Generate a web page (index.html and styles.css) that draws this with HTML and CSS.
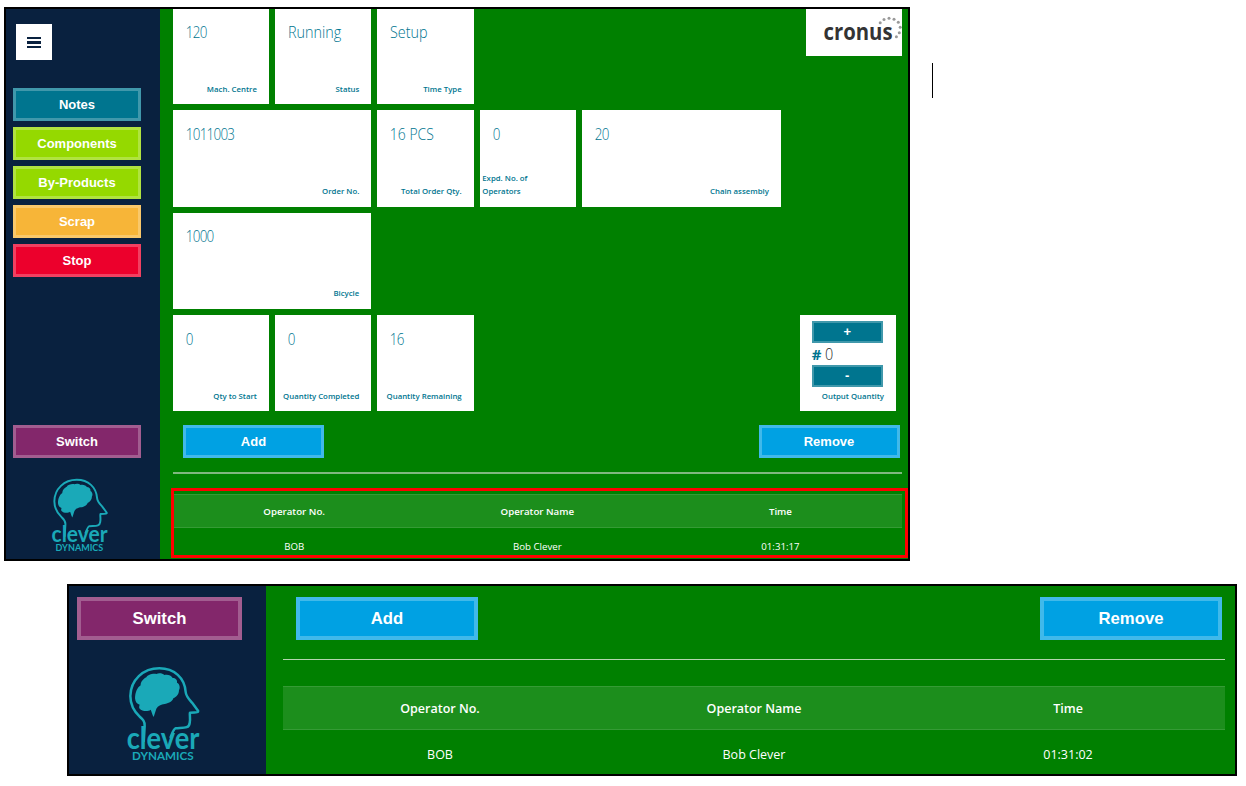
FILE: index.html
```html
<!DOCTYPE html>
<html lang="en">
<head>
<meta charset="utf-8">
<title>Operators</title>
<link rel="stylesheet" href="styles.css">
</head>
<body>
<section class="screen screen-full">
  <aside class="sidebar">
    <button class="menu" aria-label="Menu"><i></i><i></i><i></i></button>
    <nav class="actions">
      <button class="btn teal">Notes</button>
      <button class="btn lime">Components</button>
      <button class="btn lime">By-Products</button>
      <button class="btn amber">Scrap</button>
      <button class="btn red">Stop</button>
    </nav>
    <button class="btn plum switch">Switch</button>
    <svg class="brand" viewBox="48 34 224 288">
      <path class="head-line" d="M101 262 L104 214 C105 200 98 194 89 186 C70 168 61 149 61 124 C62 76 99 41 148 41 C193 41 224 70 227 112 C228 126 240 137 247 145 L264 168 C266 172 262 174 240 174 C238 181 242 190 239 205 C237 222 222 219 197 221 C191 222 187 235 181 250"/>
      <path class="brain" d="M75 131 C75 114 82 98 92 92 C91 82 101 72 109 68 C113 59 131 55 139 58 C147 54 158 56 163 61 C172 58 184 62 187 69 C197 70 203 76 201 84 C209 87 211 100 207 106 C207 119 199 127 190 131 C187 141 174 147 164 148 C153 150 144 153 139 162 L131 187 C127 182 125 171 122 165 C113 172 96 170 89 162 C86 158 88 153 89 150 C80 148 76 141 75 131Z"/>
      <text class="logo-word" x="50" y="282" textLength="218" lengthAdjust="spacingAndGlyphs">clever</text>
      <text class="logo-sub" x="66" y="316" textLength="185" lengthAdjust="spacingAndGlyphs">DYNAMICS</text>
    </svg>
  </aside>
  <main class="main">
    <div class="tiles">
      <div class="tile top"><b>120</b><span>Mach. Centre</span></div>
      <div class="tile top word"><b>Running</b><span>Status</span></div>
      <div class="tile top word"><b>Setup</b><span>Time Type</span></div>
      <div class="cronus">
        <svg width="96" height="47" viewBox="0 0 96 47">
          <text class="cronus-word" x="17.500" y="31" textLength="69" lengthAdjust="spacingAndGlyphs">cronus</text>
          <g fill="#999"><circle cx="74.200" cy="13.800" r="1.500"/><circle cx="78" cy="10.500" r="1.500"/><circle cx="83" cy="9.200" r="1.500"/><circle cx="88" cy="10.200" r="1.500"/><circle cx="92.300" cy="13.300" r="1.500"/><circle cx="94.200" cy="18.300" r="1.500"/><circle cx="93.300" cy="23.700" r="1.500"/><circle cx="90.400" cy="27.700" r="1.500"/></g>
        </svg>
      </div>
    </div>
    <div class="tiles">
      <div class="tile wide"><b>1011003</b><span>Order No.</span></div>
      <div class="tile"><b class="mixed">16 PCS</b><span>Total Order Qty.</span></div>
      <div class="tile two-line"><b>0</b><span>Expd. No. of<br>Operators</span></div>
      <div class="tile wide"><b>20</b><span>Chain assembly</span></div>
    </div>
    <div class="tiles">
      <div class="tile wide"><b>1000</b><span>Bicycle</span></div>
    </div>
    <div class="tiles">
      <div class="tile"><b>0</b><span>Qty to Start</span></div>
      <div class="tile"><b>0</b><span>Quantity Completed</span></div>
      <div class="tile"><b>16</b><span>Quantity Remaining</span></div>
      <div class="tile stepper">
        <button class="btn teal step">+</button>
        <div class="count"><strong>#</strong><em>0</em></div>
        <button class="btn teal step">-</button>
        <span>Output Quantity</span>
      </div>
    </div>
    <div class="toolbar"><button class="btn blue">Add</button><button class="btn blue">Remove</button></div>
    <div class="rule"></div>
    <div class="table">
      <div class="row head"><span>Operator No.</span><span>Operator Name</span><span>Time</span></div>
      <div class="row"><span>BOB</span><span>Bob Clever</span><span>01:31:17</span></div>
    </div>
  </main>
  <div class="highlight"></div>
</section>
<div class="caret"></div>

<section class="screen screen-detail">
  <aside class="sidebar">
    <button class="btn plum switch">Switch</button>
    <svg class="brand" viewBox="48 34 224 288">
      <path class="head-line" d="M101 262 L104 214 C105 200 98 194 89 186 C70 168 61 149 61 124 C62 76 99 41 148 41 C193 41 224 70 227 112 C228 126 240 137 247 145 L264 168 C266 172 262 174 240 174 C238 181 242 190 239 205 C237 222 222 219 197 221 C191 222 187 235 181 250"/>
      <path class="brain" d="M75 131 C75 114 82 98 92 92 C91 82 101 72 109 68 C113 59 131 55 139 58 C147 54 158 56 163 61 C172 58 184 62 187 69 C197 70 203 76 201 84 C209 87 211 100 207 106 C207 119 199 127 190 131 C187 141 174 147 164 148 C153 150 144 153 139 162 L131 187 C127 182 125 171 122 165 C113 172 96 170 89 162 C86 158 88 153 89 150 C80 148 76 141 75 131Z"/>
      <text class="logo-word" x="50" y="282" textLength="218" lengthAdjust="spacingAndGlyphs">clever</text>
      <text class="logo-sub" x="66" y="316" textLength="185" lengthAdjust="spacingAndGlyphs">DYNAMICS</text>
    </svg>
  </aside>
  <main class="main">
    <div class="toolbar"><button class="btn blue">Add</button><button class="btn blue">Remove</button></div>
    <div class="rule"></div>
    <div class="table">
      <div class="row head"><span>Operator No.</span><span>Operator Name</span><span>Time</span></div>
      <div class="row"><span>BOB</span><span>Bob Clever</span><span>01:31:02</span></div>
    </div>
  </main>
</section>
</body>
</html>
```

FILE: styles.css
```css
* { box-sizing: border-box; }

body {
  margin: 0;
  width: 1246px;
  height: 786px;
  padding: 7px 0 0 4px;
  overflow: hidden;
  background: #fff;
  display: grid;
  grid-template-columns: 906px 1fr;
  grid-template-rows: 554px 192px;
  row-gap: 23px;
  font-family: "Open Sans", sans-serif;
}

.screen {
  position: relative;
  display: flex;
  border: 2px solid #000;
  background: #008000;
  overflow: hidden;
}
.screen-full { --btn-h: 33px; --btn-border: 3px; --btn-font: 13px; }
.screen-detail {
  --btn-h: 43px; --btn-border: 4px; --btn-font: 16.700px;
  grid-column: 1 / -1;
  width: 1170px;
  margin-left: 63px;
}

.sidebar {
  flex: none;
  display: flex;
  flex-direction: column;
  background: #09213f;
}
.screen-full .sidebar { width: 154px; padding: 15px 0 0 7px; }
.screen-detail .sidebar { width: 197px; padding: 11px 0 0 8px; }

.menu {
  width: 36px;
  height: 36px;
  margin-left: 3px;
  padding: 1px 0 0;
  border: 0;
  background: #fff;
  display: flex;
  flex-direction: column;
  align-items: center;
  justify-content: center;
  gap: 2px;
}
.menu i { width: 14px; height: 2.500px; background: #09213f; }

.actions { display: flex; flex-direction: column; gap: 6px; margin-top: 28px; }

.btn {
  width: 128px;
  height: var(--btn-h);
  padding: 0;
  border: var(--btn-border) solid;
  border-radius: 0;
  color: #fff;
  font: bold var(--btn-font) "Liberation Sans", Arial, sans-serif;
}
.teal { background: #00758f; border-color: #4098ab; }
.lime { background: #95d900; border-color: #b0e340; }
.amber { background: #f7b538; border-color: #f9c86a; }
.red { background: #ec002c; border-color: #f14061; }
.plum { background: #83276b; border-color: #a25d90; }
.blue { background: #00a1e3; border-color: #40b9ea; }

.screen-full .switch { margin-top: 148px; }
.screen-detail .switch { width: 165px; }

.brand { display: block; flex: none; }
.screen-full .brand { width: 57.700px; height: 74.200px; margin: 20.200px 0 0 38.300px; }
.screen-detail .brand { width: 74.700px; height: 96px; margin: 26.300px 0 0 49px; }
.head-line { fill: none; stroke: #1aa9b8; stroke-width: 7.500px; stroke-linejoin: round; }
.brain { fill: #1aa9b8; }
.logo-word { font: 700 92px Lato, sans-serif; fill: #1aa9b8; }
.logo-sub { font: 700 35px Lato, sans-serif; fill: #1aa9b8; }

.main { flex: 1; min-width: 0; display: flex; flex-direction: column; }
.screen-full .main { padding: 0 6px 0 12.600px; }
.screen-detail .main { padding: 11px 10px 0 17px; }

.tiles { display: flex; gap: 6.100px; margin-bottom: 6.100px; flex: none; }
.tile {
  width: 96.300px;
  height: 96.300px;
  padding: 12.500px 12px 7px;
  background: #fff;
  color: #00758f;
  display: flex;
  flex-direction: column;
  justify-content: space-between;
  white-space: nowrap;
}
.tile.top { height: 95.200px; padding-top: 11.500px; }
.tile.wide { width: 198.700px; }
.tile b {
  align-self: flex-start;
  font-size: 16px;
  line-height: 23px;
  font-weight: 300;
  letter-spacing: -0.900px;
  padding-left: 1px;
  transform: scaleX(.84);
  transform-origin: left;
}
.tile.word b { letter-spacing: 0; transform: scaleX(.9); }
.tile b.mixed { letter-spacing: 0; transform: scaleX(.87); }
.tile span {
  align-self: flex-end;
  font-size: 7.800px;
  line-height: 13.500px;
  padding-bottom: 1px;
  font-weight: 600;
}
.tile.two-line span { align-self: flex-start; margin-left: -9.500px; }

.cronus { width: 96px; height: 47px; margin-left: auto; background: #fff; }
.cronus svg { display: block; }
.cronus-word { font: 700 23px "Open Sans", sans-serif; fill: #333; }

.tile.stepper { margin-left: auto; margin-right: 6px; padding-top: 6px; justify-content: flex-start; }
.stepper span { margin-top: auto; }
.step { width: 71px; height: 22px; flex: none; border-width: 2px; line-height: 16px; }
.count { display: flex; align-items: center; gap: 4px; height: 22px; flex: none; }
.count strong { font-size: 15px; }
.count em { font-size: 16px; font-style: normal; font-weight: 300; color: #222; transform: scaleX(.9); transform-origin: left; }

.toolbar { display: flex; justify-content: space-between; flex: none; }
.screen-full .toolbar { margin: 8px 2.500px 0 10.400px; }
.screen-full .toolbar .btn { width: 141px; }
.screen-detail .toolbar { margin: 0 3px 0 13px; }
.screen-detail .toolbar .btn { width: 182px; }

.rule { flex: none; background: #80b880; }
.screen-full .rule { height: 1.500px; margin: 14px 0 20px; }
.screen-detail .rule { height: 1px; margin: 19px 0 26px; background: #b5d5b0; }

.row { display: grid; grid-template-columns: repeat(3, 1fr); align-items: center; text-align: center; color: #fff; }
.head { font-weight: 600; background: #1c8e1c; border: solid #359b35; border-width: 1px 0; }
.screen-full .row { height: 37px; font-size: 9.700px; }
.screen-full .head { height: 34px; padding-top: 1px; }
.screen-detail .row { height: 48px; font-size: 12.500px; }
.screen-detail .head { height: 44px; padding-top: 1px; }

/* Annotation frame drawn over the operator table */
.highlight { position: absolute; left: 165px; top: 479px; width: 737px; height: 70px; border: 3px solid #f00; }

.caret { width: 1px; height: 35px; margin: 56px 0 0 22px; background: #000; }
```
